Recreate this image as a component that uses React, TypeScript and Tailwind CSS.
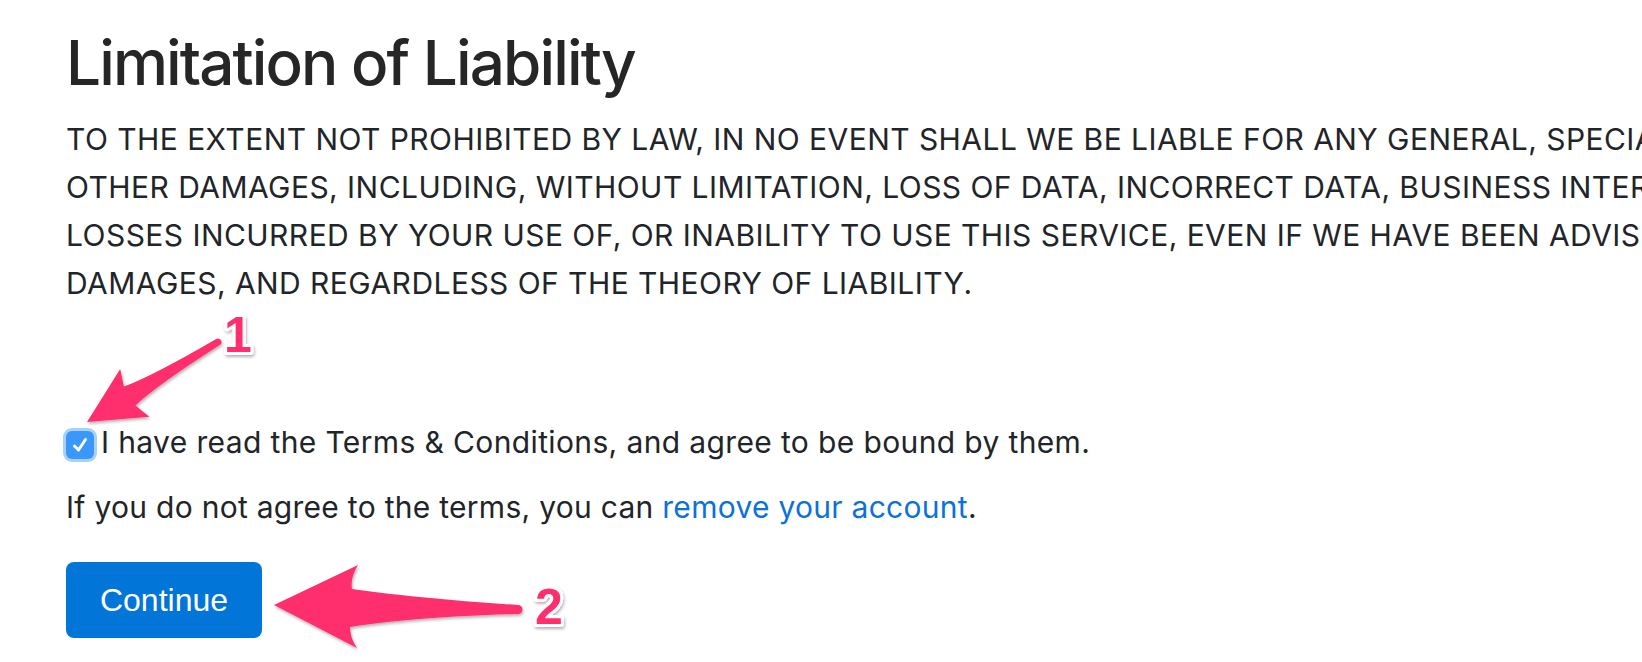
export default function App() {
  return (
    <div className="relative w-full h-[662px] overflow-hidden bg-white text-[#212529] [font-family:Inter,'Noto_Sans',sans-serif]">
      <div className="pl-[66px] pt-[26px]">
        <h1 className="text-[62px] leading-[1.2] font-medium tracking-[-1.9px] text-[#262626] whitespace-nowrap">
          Limitation of Liability
        </h1>
        <div className="mt-[15px] text-[30px] leading-[48px] tracking-[0.45px] whitespace-nowrap">
          <div>TO THE EXTENT NOT PROHIBITED BY LAW, IN NO EVENT SHALL WE BE LIABLE FOR ANY GENERAL, SPECIAL, INCIDENTAL, CONSEQUENTIAL, OR</div>
          <div>OTHER DAMAGES, INCLUDING, WITHOUT LIMITATION, LOSS OF DATA, INCORRECT DATA, BUSINESS INTERRUPTION, OR ANY OTHER</div>
          <div>LOSSES INCURRED BY YOUR USE OF, OR INABILITY TO USE THIS SERVICE, EVEN IF WE HAVE BEEN ADVISED OF THE POSSIBILITY OF SUCH</div>
          <div>DAMAGES, AND REGARDLESS OF THE THEORY OF LIABILITY.</div>
        </div>
        <label className="mt-[111px] flex items-start text-[30px] leading-[48px] tracking-[0.37px] whitespace-nowrap">
          <span className="mt-[13px] mr-[7px] flex h-[28px] w-[28px] items-center justify-center rounded-[6px] bg-[#3a97fb] ring-[3px] ring-[#a9d0f8]">
            <svg width="22" height="22" viewBox="0 0 22 22" fill="none">
              <path d="M5.5 12 L9.5 16 L16.5 5.5" stroke="white" strokeWidth="3" strokeLinecap="round" strokeLinejoin="round" />
            </svg>
          </span>
          <span>I have read the Terms &amp; Conditions, and agree to be bound by them.</span>
        </label>
        <p className="mt-[17px] text-[30px] leading-[48px] tracking-[0.28px] whitespace-nowrap">
          If you do not agree to the terms, you can <a className="text-[#0b72d9]">remove your account</a>.
        </p>
        <button className="mt-[31px] flex h-[76px] w-[196px] items-center justify-center rounded-[8px] bg-[#0275d8] text-[32px] text-white [font-family:'Liberation_Sans',Arial,sans-serif]">
          Continue
        </button>
      </div>

      <svg className="pointer-events-none absolute left-0 top-0" width="1642" height="662" viewBox="0 0 1642 662">
        <defs>
          <filter id="sh" x="-20%" y="-20%" width="140%" height="140%">
            <feDropShadow dx="1" dy="2" stdDeviation="1.5" floodColor="#000" floodOpacity="0.3" />
          </filter>
        </defs>
        <g fill="#ff2e6d" filter="url(#sh)">
          <path d="M87 422 L120.2 368.9 L123.9 386.6 Q152.6 376 216.2 339 A3.5 3.5 0 0 1 219.8 345 Q157.8 384.6 135.4 405.4 L149.4 416.7 Z" />
          <path d="M274 605 L358 565 Q350 578 352 589 C400 596 470 602 518 605 A4.5 4.5 0 0 1 518 614 C470 615 400 619 350 627 Q350 638 357 648 Z" />
        </g>
        <g fontFamily="'Liberation Sans', Arial, sans-serif" fontWeight="700" fontSize="50" fill="#ff2e6d" stroke="white" strokeWidth="6" strokeLinejoin="round" paintOrder="stroke" filter="url(#sh)">
          <text x="224" y="352">1</text>
          <text x="535" y="624">2</text>
        </g>
      </svg>
    </div>
  );
}
